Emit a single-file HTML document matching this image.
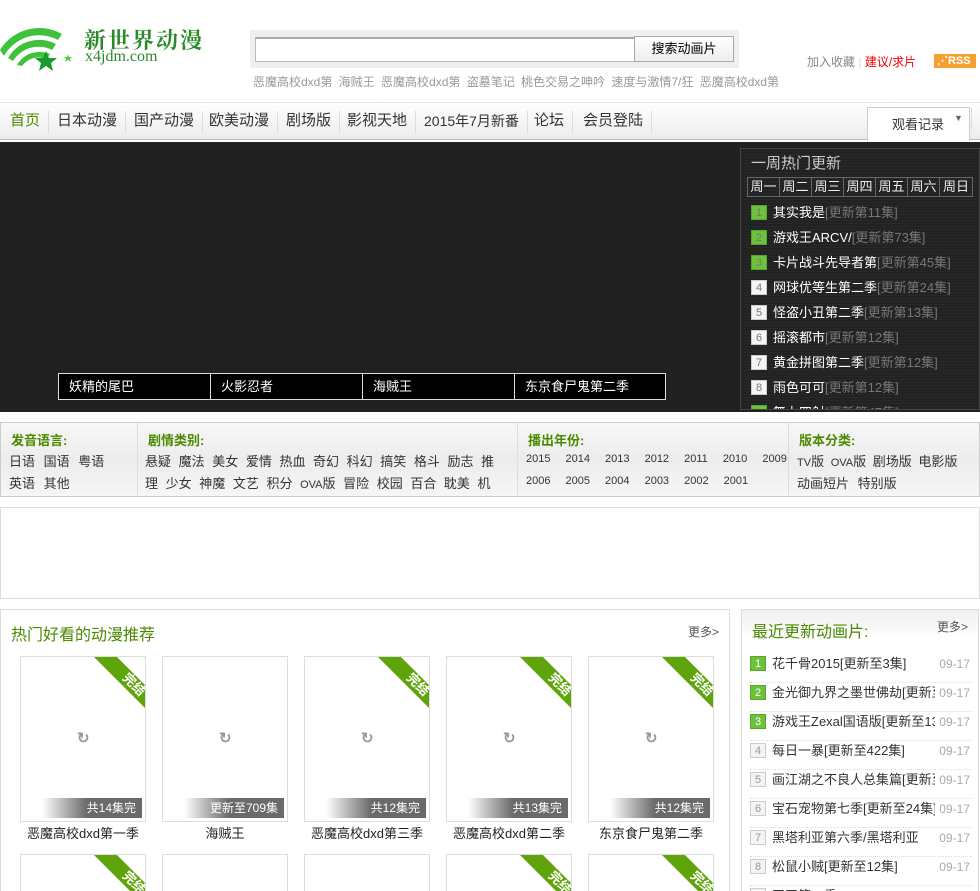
<!DOCTYPE html>
<html style="width:980px;height:891px;overflow:hidden"><head><meta charset="utf-8">
<style>
*{margin:0;padding:0;box-sizing:border-box}
body{width:980px;height:891px;overflow:hidden;background:#fff;font-family:"Liberation Sans","Noto Sans CJK SC","WenQuanYi Zen Hei",sans-serif;font-size:12px;color:#333;position:relative}
#wrap{position:absolute;left:0;top:0;width:980px;height:891px;overflow:hidden}
.a{position:absolute;white-space:nowrap}
.nav{position:absolute;left:0;top:102px;width:980px;height:38px;background:linear-gradient(#fff,#ececec);border-top:1px solid #e6e6e6;border-bottom:1px solid #bbb}
.nav span{position:absolute;top:8px;font-size:15px;color:#333;padding-right:8px;border-right:1px solid #ddd;height:22px;line-height:20px}
.dark{position:absolute;left:0;top:142px;width:980px;height:270px;background:#212121}
.panel{position:absolute;left:740px;top:148px;width:240px;height:262px;border:1px solid #444;background:repeating-linear-gradient(#222 0,#222 2px,#282828 2px,#282828 3px);overflow:hidden}
.days{position:absolute;left:6px;top:28px;display:flex;border:1px solid #666}
.days div{width:32px;height:18px;border-right:1px solid #666;color:#eee;font-size:13px;text-align:center;line-height:17px}
.days div:last-child{border-right:0}
.hl{position:absolute;left:10px;font-size:13px;color:#fff;white-space:nowrap}
.hl i{font-style:normal;color:#777}
.n{display:inline-block;width:16px;height:15px;font-size:11px;line-height:15px;text-align:center;margin-right:6px;vertical-align:1px;font-style:normal}
.g{background:#6cc23a;color:#fff;border:1px solid #5aa52e}
.w{background:#f4f4f4;color:#999;border:1px solid #ccc}
.tab{position:absolute;top:373px;height:27px;width:153px;background:#000;border:1px solid #ddd;color:#fff;font-size:13px;line-height:25px;padding-left:10px}
.filter{position:absolute;left:0;top:422px;width:980px;height:75px;border:1px solid #ccc;background:linear-gradient(#f8f8f8,#ececec 50%,#f6f6f6)}
.col{position:absolute;top:0;height:73px;border-right:1px solid #ddd}
.col b{position:absolute;top:7px;color:#4a8a00;font-size:13px}
.col p{position:absolute;font-size:13px;color:#333;white-space:nowrap;word-spacing:5px}
.card{position:absolute;width:126px;height:166px;border:1px solid #ddd;background:#fff;overflow:hidden}
.card .cap{position:absolute;right:3px;bottom:3px;width:100px;height:20px;background:linear-gradient(90deg,rgba(100,100,100,0),#6a6a6a 45%);color:#fff;font-size:12px;text-align:right;padding-right:6px;line-height:20px}
.card .ld{position:absolute;left:56px;top:72px;color:#999;font-size:15px;font-weight:bold}
.rib{position:absolute;right:0;top:0}
.title{position:absolute;font-size:13px;color:#222;text-align:center;width:142px}
.rl{position:absolute;left:750px;width:222px;height:29px;line-height:20px;border-bottom:1px dotted #ddd;font-size:13px;color:#333;white-space:nowrap;overflow:hidden}
.rl em{position:absolute;right:2px;top:0;color:#aaa;font-style:normal;font-size:12px;background:#fff;padding-left:4px}
</style></head><body><div id="wrap">

<svg class="a" style="left:0;top:20px" width="80" height="55" viewBox="0 0 80 55">
<path d="M0 30 A46 46 0 0 1 62 14 L58 20 A40 40 0 0 0 4 36Z" fill="#3ec23a"/>
<path d="M8 38 A36 36 0 0 1 56 24 L52 30 A30 30 0 0 0 13 41Z" fill="#3ec23a"/>
<path d="M17 45 A26 26 0 0 1 50 34 L46 39 A20 20 0 0 0 22 46Z" fill="#3ec23a"/>
<polygon points="46,31 49,38 57,38 51,43 53,51 46,46 39,51 41,43 35,38 43,38" fill="#1a9a2a"/>
<polygon points="68,34 69,37 72,37 70,39 71,42 68,40 65,42 66,39 64,37 67,37" fill="#5c5"/>
</svg>
<div class="a" style="left:84px;top:24px;font-size:22px;color:#2a8a2a;font-family:'Noto Serif CJK SC',serif;font-weight:bold;letter-spacing:2px">新世界动漫</div>
<div class="a" style="left:85px;top:48px;font-size:16px;color:#2a8a2a;font-family:'Liberation Serif',serif">x4jdm.com</div>

<div class="a" style="left:250px;top:30px;width:489px;height:38px;background:#efefef"></div>
<div class="a" style="left:255px;top:37px;width:380px;height:25px;background:#fff;border:1px solid #bbb;border-top:2px solid #aaa"></div>
<div class="a" style="left:634px;top:36px;width:100px;height:26px;border:1px solid #aaa;background:linear-gradient(#fff,#eee);font-size:13px;color:#000;text-align:center;line-height:24px">搜索动画片</div>
<div class="a" style="left:253px;top:73px;font-size:12px;color:#999;word-spacing:3px">恶魔高校dxd第 海贼王 恶魔高校dxd第 盗墓笔记 桃色交易之呻吟 速度与激情7/狂 恶魔高校dxd第</div>
<div class="a" style="left:807px;top:53px;font-size:12px;color:#888">加入收藏 <span style="color:#ddd">|</span> <span style="color:#e00">建议/求片</span></div>
<div class="a" style="left:934px;top:54px;width:42px;height:14px;background:#f5a030;color:#fff;font-size:11px;font-weight:bold;line-height:14px;padding-left:3px">⋰RSS</div>

<div class="nav">
<span style="left:10px;color:#4a8a00">首页</span>
<span style="left:57px">日本动漫</span>
<span style="left:134px">国产动漫</span>
<span style="left:209px">欧美动漫</span>
<span style="left:286px">剧场版</span>
<span style="left:347px">影视天地</span>
<span style="left:424px;font-size:14px">2015年7月新番</span>
<span style="left:534px">论坛</span>
<span style="left:583px">会员登陆</span>
<div class="a" style="left:867px;top:4px;width:103px;height:34px;background:#fff;border:1px solid #ccc;border-bottom:0;font-size:13px;line-height:34px;padding-left:24px">观看记录 <span style="position:absolute;left:86px;top:0;font-size:9px;color:#666">▼</span></div>
</div>

<div class="dark"></div>
<div class="panel">
<div class="a" style="left:10px;top:3px;font-size:15px;color:#ccc">一周热门更新</div>
<div class="days"><div>周一</div><div>周二</div><div>周三</div><div>周四</div><div>周五</div><div>周六</div><div>周日</div></div>
<div class="hl" style="top:53px"><i class="n g">1</i>其实我是<i>[更新第11集]</i></div>
<div class="hl" style="top:78px"><i class="n g">2</i>游戏王ARCV/<i>[更新第73集]</i></div>
<div class="hl" style="top:103px"><i class="n g">3</i>卡片战斗先导者第<i>[更新第45集]</i></div>
<div class="hl" style="top:128px"><i class="n w">4</i>网球优等生第二季<i>[更新第24集]</i></div>
<div class="hl" style="top:153px"><i class="n w">5</i>怪盗小丑第二季<i>[更新第13集]</i></div>
<div class="hl" style="top:178px"><i class="n w">6</i>摇滚都市<i>[更新第12集]</i></div>
<div class="hl" style="top:203px"><i class="n w">7</i>黄金拼图第二季<i>[更新第12集]</i></div>
<div class="hl" style="top:228px"><i class="n w">8</i>雨色可可<i>[更新第12集]</i></div>
<div class="hl" style="top:253px"><i class="n g">1</i>舞力四射<i>[更新第47集]</i></div>
</div>
<div class="tab" style="left:58px">妖精的尾巴</div>
<div class="tab" style="left:210px">火影忍者</div>
<div class="tab" style="left:362px">海贼王</div>
<div class="tab" style="left:514px;width:152px">东京食尸鬼第二季</div>

<div class="filter">
<div class="col" style="left:0;width:137px"><b style="left:10px">发音语言:</b><p style="left:8px;top:28px">日语 国语 粤语</p><p style="left:8px;top:50px">英语 其他</p></div>
<div class="col" style="left:137px;width:380px;overflow:hidden"><b style="left:10px">剧情类别:</b><p style="left:7px;top:28px;word-spacing:4px">悬疑 魔法 美女 爱情 热血 奇幻 科幻 搞笑 格斗 励志 推</p><p style="left:7px;top:50px;word-spacing:4px">理 少女 神魔 文艺 积分 <span style="font-size:11px">OVA</span>版 冒险 校园 百合 耽美 机</p></div>
<div class="col" style="left:517px;width:271px;overflow:hidden"><b style="left:10px">播出年份:</b><p style="left:8px;top:30px;font-size:11px;word-spacing:12px">2015 2014 2013 2012 2011 2010 2009 2008</p><p style="left:8px;top:52px;font-size:11px;word-spacing:12px">2006 2005 2004 2003 2002 2001</p></div>
<div class="col" style="left:788px;width:190px;border:0"><b style="left:10px">版本分类:</b><p style="left:8px;top:28px;word-spacing:3px"><span style="font-size:11px">TV</span>版 <span style="font-size:11px">OVA</span>版 剧场版 电影版</p><p style="left:8px;top:50px">动画短片 特别版</p></div>
</div>

<div class="a" style="left:0;top:507px;width:980px;height:92px;border:1px solid #ddd"></div>

<div class="a" style="left:0;top:609px;width:730px;height:290px;border:1px solid #ddd"></div>
<div class="a" style="left:11px;top:621px;font-size:16px;color:#4a8a00">热门好看的动漫推荐</div>
<div class="a" style="left:688px;top:623px;font-size:12px;color:#555">更多&gt;</div>

<svg width="0" height="0" style="position:absolute"><defs><g id="rb"><polygon points="0,0 23,0 51,28 51,51" fill="#5ea40a"/><text x="30" y="24" fill="#fff" font-size="13" font-weight="bold" transform="rotate(45 32 20)" font-family="Noto Sans CJK SC,sans-serif">完结</text></g></defs></svg>

<div class="card" style="left:20px;top:656px"><span class="ld">↻</span><svg class="rib" width="51" height="51"><use href="#rb"/></svg><div class="cap">共14集完</div></div>
<div class="card" style="left:162px;top:656px"><span class="ld">↻</span><div class="cap">更新至709集</div></div>
<div class="card" style="left:304px;top:656px"><span class="ld">↻</span><svg class="rib" width="51" height="51"><use href="#rb"/></svg><div class="cap">共12集完</div></div>
<div class="card" style="left:446px;top:656px"><span class="ld">↻</span><svg class="rib" width="51" height="51"><use href="#rb"/></svg><div class="cap">共13集完</div></div>
<div class="card" style="left:588px;top:656px"><span class="ld">↻</span><svg class="rib" width="51" height="51"><use href="#rb"/></svg><div class="cap">共12集完</div></div>
<div class="title" style="left:12px;top:823px">恶魔高校dxd第一季</div>
<div class="title" style="left:154px;top:823px">海贼王</div>
<div class="title" style="left:296px;top:823px">恶魔高校dxd第三季</div>
<div class="title" style="left:438px;top:823px">恶魔高校dxd第二季</div>
<div class="title" style="left:580px;top:823px">东京食尸鬼第二季</div>
<div class="card" style="left:20px;top:854px"><svg class="rib" width="51" height="51"><use href="#rb"/></svg></div>
<div class="card" style="left:162px;top:854px"></div>
<div class="card" style="left:304px;top:854px"></div>
<div class="card" style="left:446px;top:854px"><svg class="rib" width="51" height="51"><use href="#rb"/></svg></div>
<div class="card" style="left:588px;top:854px"><svg class="rib" width="51" height="51"><use href="#rb"/></svg></div>

<div class="a" style="left:741px;top:609px;width:238px;height:290px;border:1px solid #ddd;background:linear-gradient(#efefef,#fff 30px)"></div>
<div class="a" style="left:752px;top:618px;font-size:16px;color:#4a8a00">最近更新动画片:</div>
<div class="a" style="left:937px;top:618px;font-size:12px;color:#555">更多&gt;</div>
<div class="rl" style="top:654px"><i class="n g">1</i>花千骨2015[更新至3集]<em>09-17</em></div>
<div class="rl" style="top:683px"><i class="n g">2</i>金光御九界之墨世佛劫[更新至<em>09-17</em></div>
<div class="rl" style="top:712px"><i class="n g">3</i>游戏王Zexal国语版[更新至132<em>09-17</em></div>
<div class="rl" style="top:741px"><i class="n w">4</i>每日一暴[更新至422集]<em>09-17</em></div>
<div class="rl" style="top:770px"><i class="n w">5</i>画江湖之不良人总集篇[更新至<em>09-17</em></div>
<div class="rl" style="top:799px"><i class="n w">6</i>宝石宠物第七季[更新至24集]<em>09-17</em></div>
<div class="rl" style="top:828px"><i class="n w">7</i>黑塔利亚第六季/黑塔利亚<em>09-17</em></div>
<div class="rl" style="top:857px"><i class="n w">8</i>松鼠小贼[更新至12集]<em>09-17</em></div>
<div class="rl" style="top:886px"><i class="n w">9</i>天天第一季<em>09-17</em></div>
</div></body></html>
